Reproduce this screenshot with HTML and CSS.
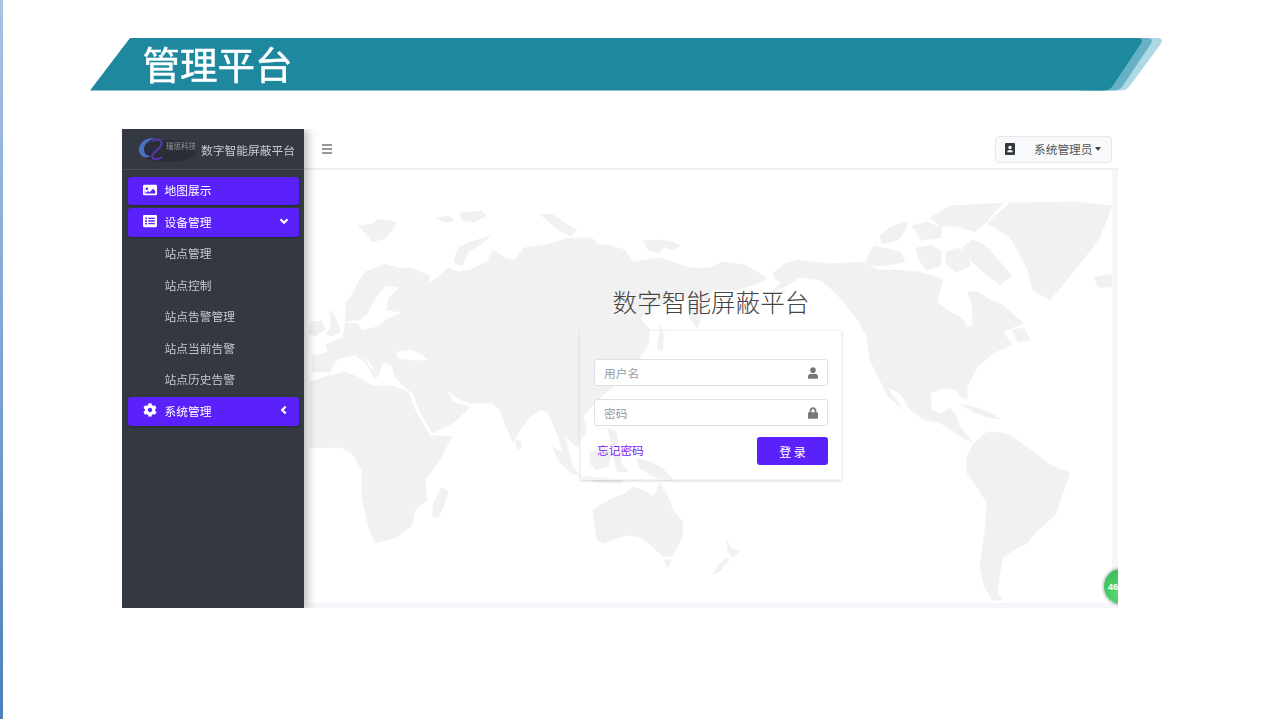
FILE: index.html
```html
<!DOCTYPE html>
<html lang="zh-CN">
<head>
<meta charset="utf-8">
<title>管理平台</title>
<link rel="stylesheet" href="styles.css">
</head>
<body>
<div class="slide">
  <div class="strip"></div>
  <div class="stage">
    <header class="banner">
      <svg class="banner-art" viewBox="90 37 1073 55" width="1073" height="55">
        <path class="b3" d="M1115 38H1157Q1165 38 1160 45L1129 87Q1126 90.500 1120 90.500H1090Z"/>
        <path class="b2" d="M1105 38H1147Q1155 38 1150 45L1122 87Q1119 90.500 1113 90.500H1080Z"/>
        <path class="b1" d="M130 38H1137Q1145 38 1140 45L1112 87Q1109 90.500 1103 90.500H90Z"/>
      </svg>
      <h1 class="banner-title">管理平台</h1>
    </header>

    <section class="app">
      <aside class="sidebar">
        <div class="brand">
          <svg class="brand-logo" viewBox="0 0 62 28" width="62" height="28">
            <ellipse class="logo-shade" cx="32" cy="16" rx="29" ry="11"/>
            <path class="logo-ring" d="M3 16C2 8 10 2 19 3C13 5 8 9 8 14C8 19 11 21 15 21C10 24 4 22 3 16Z"/>
            <path class="logo-swoosh" d="M16 6C24 2 28 7 24 12L17 19C14 24 20 26 26 22"/>
            <circle class="logo-dot" cx="14" cy="14" r="3"/>
            <text class="logo-text" x="30" y="14">瑞思科技</text>
          </svg>
          <span class="brand-name">数字智能屏蔽平台</span>
        </div>
        <nav class="nav">
          <a class="nav-item active">
            <svg class="nav-icon" viewBox="0 0 16 14"><path d="M1.500 1H14.500A1.500 1.500 0 0 1 16 2.500V11.500A1.500 1.500 0 0 1 14.500 13H1.500A1.500 1.500 0 0 1 0 11.500V2.500A1.500 1.500 0 0 1 1.500 1ZM2 3V11H14V8L11.500 5.500 7.500 9.500 6 8 2.500 10.500ZM4.500 4A1.500 1.500 0 1 0 4.500 7 1.500 1.500 0 0 0 4.500 4Z" fill-rule="evenodd"/></svg>
            <span>地图展示</span>
          </a>
          <a class="nav-item active">
            <svg class="nav-icon" viewBox="0 0 16 14"><path d="M1.500 0H14.500A1.500 1.500 0 0 1 16 1.500V12.500A1.500 1.500 0 0 1 14.500 14H1.500A1.500 1.500 0 0 1 0 12.500V1.500A1.500 1.500 0 0 1 1.500 0ZM2.500 3V5H4.500V3ZM6 3.250V4.750H13.500V3.250ZM2.500 6V8H4.500V6ZM6 6.250V7.750H13.500V6.250ZM2.500 9V11H4.500V9ZM6 9.250V10.750H13.500V9.250Z" fill-rule="evenodd"/></svg>
            <span>设备管理</span>
            <svg class="nav-arrow" viewBox="0 0 10 10"><path d="M1.500 3.200L5 6.700 8.500 3.200"/></svg>
          </a>
          <a class="nav-item sub">站点管理</a>
          <a class="nav-item sub">站点控制</a>
          <a class="nav-item sub">站点告警管理</a>
          <a class="nav-item sub">站点当前告警</a>
          <a class="nav-item sub">站点历史告警</a>
          <a class="nav-item active">
            <svg class="nav-icon" viewBox="0 0 512 512"><path d="M487.400 315.700l-42.600-24.600c4.300-23.200 4.300-47 0-70.200l42.600-24.600c4.900-2.800 7.100-8.600 5.500-14-11.100-35.600-30-67.800-54.700-94.600-3.800-4.100-10-5.100-14.800-2.300L380.800 110c-17.900-15.400-38.500-27.300-60.800-35.100V25.800c0-5.600-3.900-10.500-9.400-11.700-36.700-8.200-74.300-7.800-109.200 0-5.500 1.200-9.400 6.100-9.400 11.700V75c-22.200 7.900-42.800 19.800-60.800 35.100L88.700 85.500c-4.900-2.800-11-1.900-14.800 2.300-24.700 26.700-43.600 58.900-54.700 94.600-1.700 5.400.6 11.200 5.500 14L67.300 221c-4.300 23.200-4.300 47 0 70.200l-42.600 24.600c-4.900 2.800-7.100 8.600-5.500 14 11.100 35.600 30 67.800 54.700 94.600 3.800 4.100 10 5.100 14.800 2.300l42.600-24.600c17.900 15.400 38.500 27.300 60.800 35.100v49.200c0 5.600 3.900 10.500 9.400 11.700 36.700 8.200 74.300 7.800 109.200 0 5.500-1.200 9.400-6.100 9.400-11.700v-49.200c22.200-7.900 42.800-19.800 60.800-35.100l42.600 24.600c4.900 2.800 11 1.900 14.800-2.300 24.700-26.700 43.600-58.900 54.700-94.600 1.500-5.500-.7-11.300-5.600-14.100zM256 336c-44.100 0-80-35.900-80-80s35.900-80 80-80 80 35.900 80 80-35.900 80-80 80z"/></svg>
            <span>系统管理</span>
            <svg class="nav-arrow" viewBox="0 0 10 10"><path d="M6.700 1.500L3.200 5 6.700 8.500"/></svg>
          </a>
        </nav>
      </aside>

      <div class="main">
        <div class="topbar">
          <svg class="burger" viewBox="0 0 10 10" width="10" height="10"><path d="M0 1H10M0 5H10M0 9H10"/></svg>
          <button class="user-btn" type="button">
            <svg class="user-icon" viewBox="0 0 10 12" width="10" height="12"><path d="M1 0H9A1 1 0 0 1 10 1V11A1 1 0 0 1 9 12H1A1 1 0 0 1 0 11V1A1 1 0 0 1 1 0ZM5 2.800A1.700 1.700 0 1 0 5 6.200 1.700 1.700 0 0 0 5 2.800ZM2.200 9.300H7.800C7.800 7.800 6.800 7 5 7S2.200 7.800 2.200 9.300Z" fill-rule="evenodd"/></svg>
            <span class="user-name">系统管理员</span>
            <span class="caret"></span>
          </button>
        </div>
        <div class="content">
          <div class="panel">
            <svg class="map" viewBox="304 170 808 433" width="808" height="433" aria-hidden="true">
              <!-- Eurasia -->
              <path d="M312 356L328 352 326 344 343 338 346 316 346 303 352 295 358 283 365 272 376 268 385 264 398 268 410 268 420 272 430 276 427 285 437 278 448 268 458 272 470 270 487 262 493 250 505 258 515 260 524 248 545 245 570 238 592 238 597 244 612 246 625 250 633 262 660 258 690 268 710 268 722 262 745 265 767 278 758 283 750 286 735 290 712 290 706 305 697 328 690 318 687 298 672 302 655 306 640 318 650 330 648 345 640 358 625 372 612 388 600 398 590 408 583 417 587 430 577 447 565 436 572 467 566 462 558 436 548 412 540 410 530 417 520 430 513 442 507 428 500 410 492 403 470 403 460 400 447 390 453 402 470 407 453 423 433 433 420 412 413 393 408 390 395 377 392 366 383 362 380 370 378 376 370 362 362 352 369 366 378 376 375 378 365 362 355 355 340 358 335 362 330 372 312 372Z"/>
              <!-- Africa -->
              <path d="M310 382L328 376 345 372 360 378 372 386 392 386 408 392 415 410 430 436 452 436 440 460 425 480 427 500 415 510 412 525 395 538 375 543 368 525 362 497 362 470 352 453 340 447 310 448Z"/>
              <path d="M441 488L448 491 444 505 438 518 433 517 433 505Z"/>
              <!-- UK, Ireland and Arctic isles -->
              <path d="M330 310L336 318 341 332 332 336 326 334 331 326Z"/>
              <path d="M311 322L322 321 325 330 316 336 309 334Z"/>
              <path d="M358 226L372 224 378 219 396 222 392 230 386 238 372 242 368 236Z"/>
              <path d="M436 218L448 216 454 220 446 223ZM460 213L482 211 486 216 474 222 462 220Z"/>
              <path d="M454 262L458 248 470 242 491 236 480 245 468 252 462 266Z"/>
              <path d="M541 215L552 214 566 224 577 230 570 236 556 228Z"/>
              <path d="M644 241L660 240 672 242 680 246 672 250 664 247 660 253 648 250Z"/>
              <path d="M660 325L664 335 662 352 657 348 659 336Z"/>
              <!-- South East Asia, Oceania -->
              <path d="M552 447L562 452 572 464 578 474 572 474 560 462Z"/>
              <path d="M590 452L604 446 612 452 608 466 596 470 590 464Z"/>
              <path d="M578 476L600 478 624 480 620 483 596 482Z"/>
              <path d="M612 454L624 450 620 462 628 472 618 472Z"/>
              <path d="M608 428L616 432 618 444 612 446Z"/>
              <path d="M636 458L650 462 662 468 674 480 664 480 652 476 640 468Z"/>
              <path d="M516 440L521 442 521 448 517 449Z"/>
              <path d="M593 510L613 498 624 494 633 487 643 490 654 497 660 483 667 495 672 508 683 523 682 538 672 556 662 556 650 544 640 537 628 535 620 537 604 543 597 540Z"/>
              <path d="M664 560L671 560 669 567 666 566Z"/>
              <path d="M727 540L731 548 740 551 733 557 728 552ZM726 558L729 560 719 572 713 574 716 568Z"/>
              <!-- North America -->
              <path d="M773 273L785 264 797 260 830 264 863 262 878 270 897 270 918 272 930 275 943 280 940 290 937 302 950 312 962 318 967 328 973 325 972 305 968 292 978 292 990 300 1003 305 1014 315 1023 323 1003 332 1012 345 993 353 977 367 967 387 967 400 960 396 957 390 945 388 930 393 932 410 940 414 950 408 956 416 960 427 973 442 966 440 952 430 940 423 925 420 910 410 901 394 887 387 903 410 888 396 870 360 867 337 858 320 850 310 835 292 820 280 800 277 786 286 772 292 782 282 776 280Z"/>
              <path d="M868 256L874 246 888 249 900 252 905 262 882 266 866 264Z"/>
              <path d="M880 236L892 226 908 222 904 232 898 240 882 244Z"/>
              <path d="M912 226L926 222 942 228 940 238 922 240Z"/>
              <path d="M916 248L932 245 942 252 940 266 926 270 918 258Z"/>
              <path d="M946 252L958 248 968 254 970 266 956 272 946 264Z"/>
              <path d="M962 248L972 240 985 245 1000 262 1012 276 1000 285 988 276 972 262Z"/>
              <path d="M930 218L950 206 1003 203 986 222 975 232 956 226 940 226Z"/>
              <path d="M1012 330L1024 328 1030 340 1018 342Z"/>
              <path d="M962 405L978 408 992 414 1000 419 986 417 974 412Z"/>
              <!-- South America -->
              <path d="M967 457L973 444 987 432 1000 433 1010 435 1035 453 1050 465 1070 473 1064 490 1060 500 1056 514 1045 524 1034 534 1027 543 1014 550 1003 557 1000 572 997 592 1002 600 992 600 984 585 980 567 985 530 987 503 978 488 967 473Z"/>
              <!-- Greenland, Iceland -->
              <path d="M987 223L1010 203 1077 202 1112 206 1100 237 1092 248 1077 267 1050 300 1033 290 1027 267 1010 237Z"/>
              <path d="M1094 277L1112 274 1112 287 1098 287Z"/>
              <!-- Inland seas -->
              <path class="water" d="M347 322L358 323 362 330 378 326 386 319 400 313 386 310 388 298 398 288 386 286 376 298 368 314 360 320Z"/>
              <path class="water" d="M397 352L410 350 421 354 428 360 412 360 398 358Z"/>
              <path class="water" d="M447 392L460 400 466 405 458 403Z"/>
            </svg>
            <div class="login">
              <h2 class="login-title">数字智能屏蔽平台</h2>
              <form class="card">
                <label class="field">
                  <input class="field-input" type="text" placeholder="用户名">
                  <svg class="field-icon" viewBox="0 0 448 512"><path d="M224 256c70.700 0 128-57.300 128-128S294.700 0 224 0 96 57.300 96 128s57.300 128 128 128zm89.600 32h-16.700c-22.200 10.200-46.900 16-72.900 16s-50.600-5.800-72.900-16h-16.700C60.200 288 0 348.200 0 422.400V464c0 26.500 21.500 48 48 48h352c26.500 0 48-21.500 48-48v-41.600c0-74.200-60.200-134.400-134.400-134.400z"/></svg>
                </label>
                <label class="field">
                  <input class="field-input" type="password" placeholder="密码">
                  <svg class="field-icon" viewBox="0 0 448 512"><path d="M400 224h-24v-72C376 68.200 307.800 0 224 0S72 68.200 72 152v72H48c-26.500 0-48 21.500-48 48v192c0 26.500 21.500 48 48 48h352c26.500 0 48-21.500 48-48V272c0-26.500-21.500-48-48-48zm-104 0H152v-72c0-39.700 32.300-72 72-72s72 32.300 72 72v72z"/></svg>
                </label>
                <div class="actions">
                  <a class="forgot">忘记密码</a>
                  <button class="submit" type="button">登 录</button>
                </div>
              </form>
            </div>
          </div>
        </div>
        <div class="float-badge">46</div>
      </div>
    </section>
  </div>
</div>
</body>
</html>
```

FILE: styles.css
```css
* { box-sizing: border-box; }
html, body { margin: 0; height: 100%; background: #fff; overflow: hidden; }
body { font-family: "Noto Sans CJK SC", "Noto Sans", sans-serif; }

.slide { display: flex; width: 1282px; height: 719px; }
.strip { width: 3px; flex: none; background: linear-gradient(180deg, #a6c3e4 0%, #7ea4d2 50%, #4d7fb8 100%); }
.stage { flex: 1; display: flex; flex-direction: column; align-items: flex-start; }

.banner { position: relative; width: 1073px; height: 55px; margin: 37px 0 0 87px; display: flex; align-items: center; padding: 0 0 3px 52.5px; }
.banner-art { position: absolute; left: 0; top: 0; }
.b1 { fill: #1d889e; }
.b2 { fill: #67b0c5; }
.b3 { fill: #aed8e6; }
.banner-title { position: relative; margin: 0; color: #fff; font-size: 37.5px; font-weight: 400; line-height: 52px; -webkit-text-stroke: .5px #fff; filter: blur(.3px); }

.app { position: relative; width: 996px; height: 479px; margin: 37px 0 0 119px; display: flex; overflow: hidden; filter: blur(.35px); }

.sidebar { position: relative; z-index: 2; width: 182px; flex: none; background: #343941; box-shadow: 3px 0 10px rgba(0, 0, 0, .3); }
.brand { height: 41px; display: flex; align-items: center; padding: 1px 0 0 14px; border-bottom: 1px solid #484e56; }
.brand-logo { flex: none; margin-right: 3px; margin-top: -2px; }
.logo-shade { fill: #2b2e36; }
.logo-ring { fill: #4a70c4; }
.logo-swoosh { fill: none; stroke: #5a35b8; stroke-width: 2; }
.logo-dot { fill: #26304a; }
.logo-text { fill: #9a9ca2; font-size: 7.5px; }
.brand-name { color: #c8cacd; font-size: 11.75px; white-space: nowrap; }

.nav { display: flex; flex-direction: column; padding-top: 6.5px; }
.nav-item { height: 28.5px; margin: 0 5px 3px 6px; padding: 0 0 2px 36.5px; display: flex; align-items: center; color: #c6c8cb; font-size: 11.75px; flex: none; }
.nav-item.active { position: relative; padding-left: 15px; color: #fff; background: #5a21fb; border-radius: 3px; box-shadow: 0 1px 2px rgba(0, 0, 0, .3); }
.nav-icon { width: 14px; height: 14px; margin-right: 7.5px; fill: #fff; flex: none; }
.nav-arrow { margin-left: auto; margin-right: 10px; width: 10px; height: 10px; fill: none; stroke: #fff; stroke-width: 2.2; }

.main { flex: 1; display: flex; flex-direction: column; min-width: 0; }
.topbar { height: 41px; flex: none; display: flex; align-items: center; justify-content: space-between; padding: 0 6px 0 18px; background: #fff; border-bottom: 2px solid #eff0f3; }
.burger { stroke: #777; stroke-width: 1.4; fill: none; }
.user-btn { width: 117px; height: 27px; display: flex; align-items: center; padding: 0 0 2px 9px; margin-top: 2px; background: #f8f9fa; border: 1px solid #e6e8eb; border-radius: 4px; font: inherit; }
.user-icon { fill: #343a40; flex: none; }
.user-name { margin-left: 19px; color: #555; font-size: 11.7px; }
.caret { margin-left: 3px; border: 3.5px solid transparent; border-top: 4px solid #444; border-bottom: 0; }

.content { flex: 1; background: #f4f6f9; padding: 0 6px 5px 0; min-height: 0; display: flex; }
.panel { position: relative; flex: 1; background: #fff; overflow: hidden; }
.map { position: absolute; left: 0; top: 0; fill: #f1f1f2; stroke: #f1f1f2; stroke-width: .8; stroke-linejoin: round; filter: blur(.5px); }
.map .water { fill: #fff; stroke: #fff; }

.login { position: relative; width: 262px; margin-left: 276px; padding-top: 114px; }
.login-title { margin: 0 0 11px; text-align: center; color: #444; font-size: 24.6px; font-weight: 300; line-height: 35px; white-space: nowrap; }
.card { height: 150px; padding: 28px 13px 0; border: 1px solid #f3f3f5; border-radius: 2px; box-shadow: 0 1px 3px rgba(0, 0, 0, .16); display: flex; flex-direction: column; gap: 13px; }
.field { height: 27px; flex: none; display: flex; align-items: center; background: #fff; border: 1px solid #dfe0e8; border-radius: 3px; padding: 0 9px 1px 9px; }
.field-input { flex: 1; min-width: 0; border: 0; padding: 0; background: transparent; outline: 0; font: inherit; font-size: 11.7px; color: #555; }
.field-input::placeholder { color: #9a9a9e; opacity: 1; }
.field-icon { width: 10px; height: 12px; fill: #777; flex: none; margin-top: 1px; }
.actions { display: flex; align-items: center; justify-content: space-between; margin-top: -2px; padding-left: 3px; }
.forgot { color: #7a22f5; font-size: 11.7px; padding-bottom: 3px; }
.submit { width: 71px; height: 28px; padding: 0; background: #5a21fb; color: #fff; border: 0; border-radius: 3px; font: inherit; font-size: 12px; }

.float-badge { position: absolute; right: -20px; top: 439px; width: 35px; height: 37px; border-radius: 50%; display: flex; align-items: center; justify-content: flex-start; padding-left: 4px; background: radial-gradient(circle at 45% 70%, #56d86e, #38b355); border: 1.5px solid #d5d8d8; box-shadow: 0 0 2px rgba(0, 0, 0, .5); color: #fff; font: 700 9px "Liberation Sans", sans-serif; }
```
